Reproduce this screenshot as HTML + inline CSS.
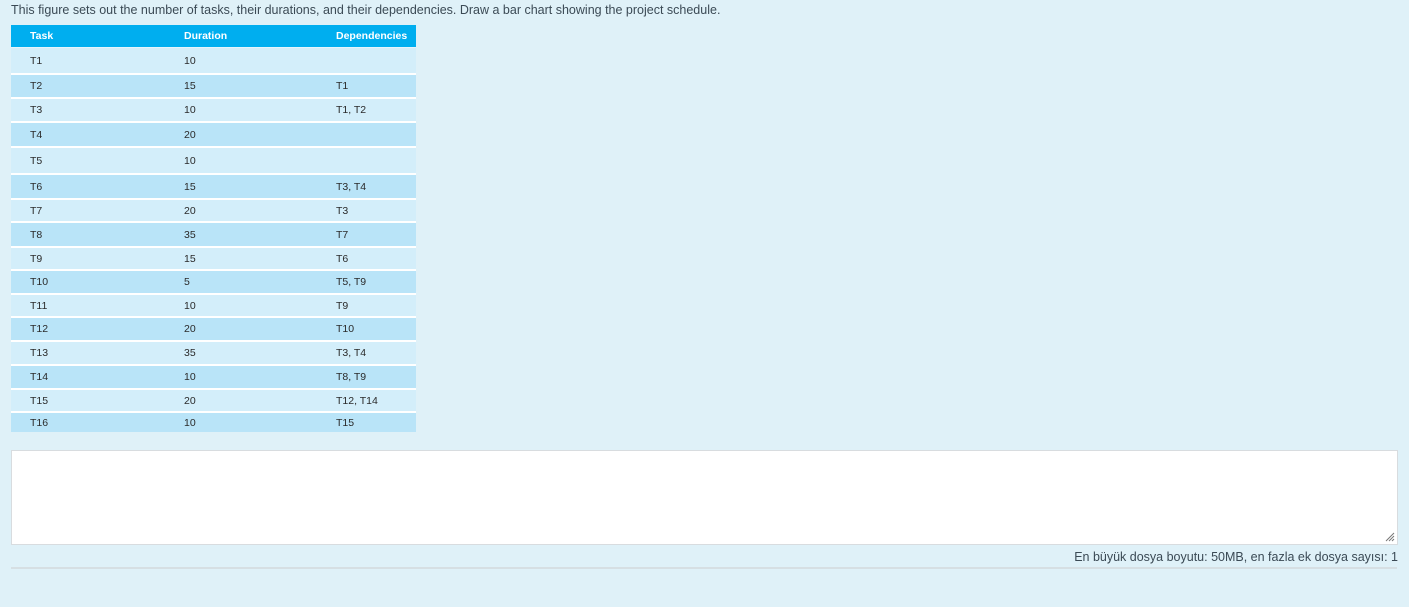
<!DOCTYPE html>
<html><head><meta charset="utf-8"><style>
body{margin:0;background:#dff1f8;width:1409px;height:607px;position:relative;overflow:hidden;font-family:"Liberation Sans",Arial,sans-serif;}
.q{position:absolute;left:11px;top:3px;font-size:12.5px;color:#3b4a55;white-space:nowrap;}
.t{position:absolute;left:11px;width:405px;font-size:10.5px;color:#2a2a2a;}
.r{position:absolute;left:0;width:405px;border-top:2px solid #fff;box-sizing:border-box;}
.r span{position:absolute;top:50%;transform:translateY(-50%);white-space:nowrap;}
.a{left:19px}.b{left:173px}.c{left:325px}
.h{background:#00aeef;color:#fff;font-weight:bold;border-top:none}
.l{background:#d3eefa}.d{background:#b9e4f8}
.ta{position:absolute;left:11px;top:450px;width:1387px;height:95px;background:#fff;border:1px solid #d8dcdf;box-sizing:border-box;}
.f{position:absolute;right:11px;top:550px;font-size:12.5px;color:#3b4a55;}
.line{position:absolute;left:11px;top:567px;width:1386px;height:2px;background:#d6dfe3;}
</style></head><body>
<div class="q">This figure sets out the number of tasks, their durations, and their dependencies. Draw a bar chart showing the project schedule.</div>
<div class="t" style="top:25px">
<div class="r h" style="top:0;height:22px"><span class="a">Task</span><span class="b">Duration</span><span class="c">Dependencies</span></div>
<div class="r l" style="top:22px;height:26px;border-top:1px solid #e6f5fc"><span class="a">T1</span><span class="b">10</span><span class="c"></span></div>
<div class="r d" style="top:48px;height:24px"><span class="a">T2</span><span class="b">15</span><span class="c">T1</span></div>
<div class="r l" style="top:72px;height:24px"><span class="a">T3</span><span class="b">10</span><span class="c">T1, T2</span></div>
<div class="r d" style="top:96px;height:25px"><span class="a">T4</span><span class="b">20</span><span class="c"></span></div>
<div class="r l" style="top:121px;height:27px"><span class="a">T5</span><span class="b">10</span><span class="c"></span></div>
<div class="r d" style="top:148px;height:25px"><span class="a">T6</span><span class="b">15</span><span class="c">T3, T4</span></div>
<div class="r l" style="top:173px;height:23px"><span class="a">T7</span><span class="b">20</span><span class="c">T3</span></div>
<div class="r d" style="top:196px;height:25px"><span class="a">T8</span><span class="b">35</span><span class="c">T7</span></div>
<div class="r l" style="top:221px;height:23px"><span class="a">T9</span><span class="b">15</span><span class="c">T6</span></div>
<div class="r d" style="top:244px;height:24px"><span class="a">T10</span><span class="b">5</span><span class="c">T5, T9</span></div>
<div class="r l" style="top:268px;height:23px"><span class="a">T11</span><span class="b">10</span><span class="c">T9</span></div>
<div class="r d" style="top:291px;height:24px"><span class="a">T12</span><span class="b">20</span><span class="c">T10</span></div>
<div class="r l" style="top:315px;height:24px"><span class="a">T13</span><span class="b">35</span><span class="c">T3, T4</span></div>
<div class="r d" style="top:339px;height:24px"><span class="a">T14</span><span class="b">10</span><span class="c">T8, T9</span></div>
<div class="r l" style="top:363px;height:23px"><span class="a">T15</span><span class="b">20</span><span class="c">T12, T14</span></div>
<div class="r d" style="top:386px;height:21px"><span class="a">T16</span><span class="b">10</span><span class="c">T15</span></div>
</div>
<div class="ta"><svg style="position:absolute;right:2px;bottom:2px" width="10" height="10"><path d="M9 1L1 9M9 4L4 9M9 7L7 9" stroke="#777" stroke-width="1"/></svg></div>
<div class="f">En büyük dosya boyutu: 50MB, en fazla ek dosya sayısı: 1</div>
<div class="line"></div>
</body></html>
